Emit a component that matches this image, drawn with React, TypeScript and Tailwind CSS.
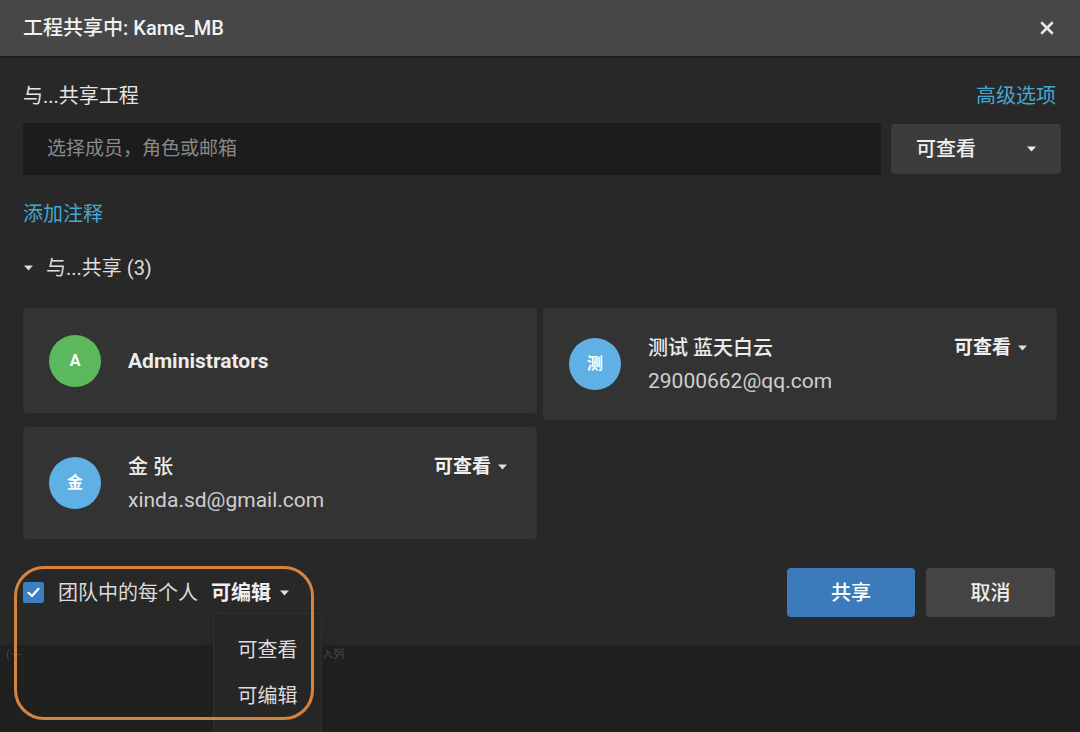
import React from 'react';

type Member = {
  initial: string;
  color: string;
  name: string;
  email?: string;
  role?: string;
  height: string;
};

const Caret: React.FC<{ className?: string }> = ({ className }) => (
  <svg width="9" height="6" viewBox="0 0 9 6" className={className}>
    <polygon points="0,0.5 9,0.5 4.5,5.5" fill="currentColor" />
  </svg>
);

const MemberCard: React.FC<{ m: Member }> = ({ m }) => (
  <div className={`flex items-center rounded-[4px] bg-[#333333] pl-[26px] pr-[30px] ${m.height}`}>
    <div
      className={`flex h-[52px] w-[52px] shrink-0 items-center justify-center rounded-full text-[16px] font-bold text-white ${m.color}`}
    >
      {m.initial}
    </div>
    <div className="ml-[27px] flex-1">
      <div className="flex items-center justify-between">
        <span className={`leading-[24px] text-[#ececec] ${m.email ? 'text-[20px] font-medium' : 'text-[21px] font-bold'}`}>{m.name}</span>
        {m.role && (
          <span className="flex items-center gap-[7px] text-[19px] font-bold leading-[24px] text-[#f0f0f0]">
            {m.role}
            <Caret className="text-[#e0e0e0]" />
          </span>
        )}
      </div>
      {m.email && <div className="mt-[9px] text-[21px] leading-[24px] text-[#cfcfcf]">{m.email}</div>}
    </div>
  </div>
);

export default function App() {
  const left: Member[] = [
    { initial: 'A', color: 'bg-[#5cb85c]', name: 'Administrators', height: 'h-[105px]' },
    { initial: '金', color: 'bg-[#5eb0e5]', name: '金 张', email: 'xinda.sd@gmail.com', role: '可查看', height: 'h-[112px]' },
  ];
  const right: Member[] = [
    { initial: '测', color: 'bg-[#5eb0e5]', name: '测试 蓝天白云', email: '29000662@qq.com', role: '可查看', height: 'h-[112px]' },
  ];

  return (
    <div className="relative h-[732px] w-[1080px] overflow-hidden bg-[#202020] font-['Roboto','Noto_Sans_CJK_SC',sans-serif] text-[#e6e6e6]">
      <div className="bg-[#282828]">
        {/* header */}
        <div className="flex h-[58px] items-center justify-between border-b-2 border-[#1d1d1d] bg-[#474747] pl-[23px] pr-[26px]">
          <span className="text-[20px] font-medium text-[#f2f2f2]">工程共享中: Kame_MB</span>
          <svg width="14" height="14" viewBox="0 0 14 14" className="text-[#e8e8e8]">
            <path d="M2 2 L12 12 M12 2 L2 12" stroke="currentColor" strokeWidth="2.6" strokeLinecap="round" />
          </svg>
        </div>

        <div className="px-[23px] pb-[28px] pt-[26px]">
          <div className="flex items-center justify-between text-[20px] leading-[24px]">
            <span className="text-[#e6e6e6]">与...共享工程</span>
            <span className="mr-[1px] text-[#46a6d0]">高级选项</span>
          </div>

          <div className="-mr-[4px] mt-[15px] flex items-center gap-[10px]">
            <div className="flex h-[52px] flex-1 items-center rounded-[3px] bg-[#1c1c1c] pl-[24px] text-[19px] text-[#8a8a8a]">
              选择成员，角色或邮箱
            </div>
            <div className="flex h-[50px] w-[170px] items-center justify-between rounded-[4px] bg-[#3c3c3c] pl-[25px] pr-[25px] text-[20px] font-medium text-[#f0f0f0]">
              可查看
              <Caret className="text-[#eeeeee]" />
            </div>
          </div>

          <div className="mt-[27px] text-[20px] leading-[24px] text-[#46a6d0]">添加注释</div>

          <div className="mt-[30px] flex items-center text-[20px] leading-[24px] text-[#dedede]">
            <Caret className="ml-[1px] text-[#dddddd]" />
            <span className="ml-[13px]">与...共享 (3)</span>
          </div>

          <div className="mt-[28px] flex items-start gap-[6px]">
            <div className="flex flex-1 flex-col gap-[14px]">
              {left.map(m => (
                <MemberCard key={m.name} m={m} />
              ))}
            </div>
            <div className="flex flex-1 flex-col gap-[14px]">
              {right.map(m => (
                <MemberCard key={m.name} m={m} />
              ))}
            </div>
          </div>

          <div className="mr-[2px] mt-[29px] flex items-center justify-between">
            <div className="flex items-center">
              <div className="flex h-[21px] w-[21px] items-center justify-center rounded-[2px] bg-[#3c7ebf]">
                <svg width="15" height="15" viewBox="0 0 15 15">
                  <path d="M2.5 7.8 L6 11 L12.5 3.8" fill="none" stroke="white" strokeWidth="2.2" strokeLinecap="round" strokeLinejoin="round" />
                </svg>
              </div>
              <span className="ml-[14px] text-[20px] text-[#dcdcdc]">团队中的每个人</span>
              <span className="ml-[13px] text-[20px] font-bold text-[#f0f0f0]">可编辑</span>
              <Caret className="ml-[9px] text-[#dddddd]" />
            </div>
            <div className="flex gap-[11px]">
              <button className="h-[49px] w-[128px] rounded-[4px] bg-[#3b7bbb] text-[20px] font-medium text-white">共享</button>
              <button className="h-[49px] w-[129px] rounded-[4px] bg-[#444444] text-[20px] font-medium text-[#eeeeee]">取消</button>
            </div>
          </div>
        </div>
      </div>

      {/* faint page content behind the dialog */}
      <div className="flex items-center justify-between px-[6px] pt-[2px] text-[11px] text-[#4a4a4a]">
        <span>(·—</span>
        <span className="mr-auto ml-[290px]">加入列</span>
      </div>

      {/* permission menu */}
      <div className="absolute left-[213px] top-[613px] h-[140px] w-[109px] border border-[#303030] bg-[#262626] pt-[13px] text-[20px] text-[#dcdcdc] shadow-lg">
        <div className="flex h-[46px] items-center justify-center">可查看</div>
        <div className="flex h-[46px] items-center justify-center">可编辑</div>
      </div>

      {/* annotation */}
      <div className="pointer-events-none absolute left-[14px] top-[566px] h-[154px] w-[300px] rounded-[30px] border-[3px] border-[#d8823c]" />
    </div>
  );
}
